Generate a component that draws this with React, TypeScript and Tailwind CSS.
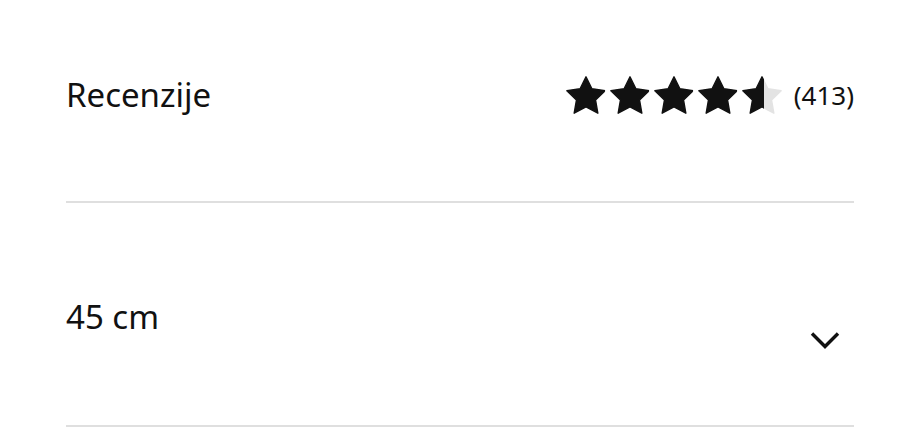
import React from 'react';

// fat five-point star, outer radius 20, inner radius 10, centred on 0,0
const STAR_PATH =
  'M0 -20L5.88 -8.09L19.02 -6.18L9.51 3.09L11.76 16.18L0 10L-11.76 16.18L-9.51 3.09L-19.02 -6.18L-5.88 -8.09Z';

const Star: React.FC<{ fill: number; id: string }> = ({ fill, id }) => (
  <svg width="40" height="38" viewBox="-19.8 -20.8 39.6 37.8" aria-hidden="true">
    <defs>
      <linearGradient id={id} x1="0" x2="1" y1="0" y2="0">
        <stop offset={fill} stopColor="#111111" />
        <stop offset={fill} stopColor="#e3e3e3" />
      </linearGradient>
    </defs>
    <path d={STAR_PATH} fill={`url(#${id})`} stroke={`url(#${id})`} strokeWidth="1.4" strokeLinejoin="round" />
  </svg>
);

const App: React.FC = () => {
  const ratings = [1, 1, 1, 1, 0.55];

  return (
    <div className="w-[920px] h-[445px] bg-white px-[66px] text-[#111111]" style={{ fontFamily: '"Noto Sans", sans-serif' }}>
      <div className="h-[203px] pt-[71px] border-b-2 border-[#dfdfdf] flex items-start justify-between">
        <span className="text-[33px] leading-[48px]">Recenzije</span>
        <div className="flex items-center h-[48px]">
          <div className="flex items-center gap-[4px]">
            {ratings.map((r, i) => (
              <Star key={i} fill={r} id={`star-${i}`} />
            ))}
          </div>
          <span className="ml-[12px] text-[26px] leading-none">(413)</span>
        </div>
      </div>

      <div className="h-[224px] pt-[90px] border-b-2 border-[#dfdfdf] flex items-start justify-between">
        <span className="text-[33px] leading-[48px]">45 cm</span>
        <svg className="mt-[38px] mr-[14px]" width="30" height="18" viewBox="0 0 30 18" aria-hidden="true">
          <path d="M2 2.5L15 15.5L28 2.5" fill="none" stroke="#111111" strokeWidth="3.4" />
        </svg>
      </div>
    </div>
  );
};

export default App;
